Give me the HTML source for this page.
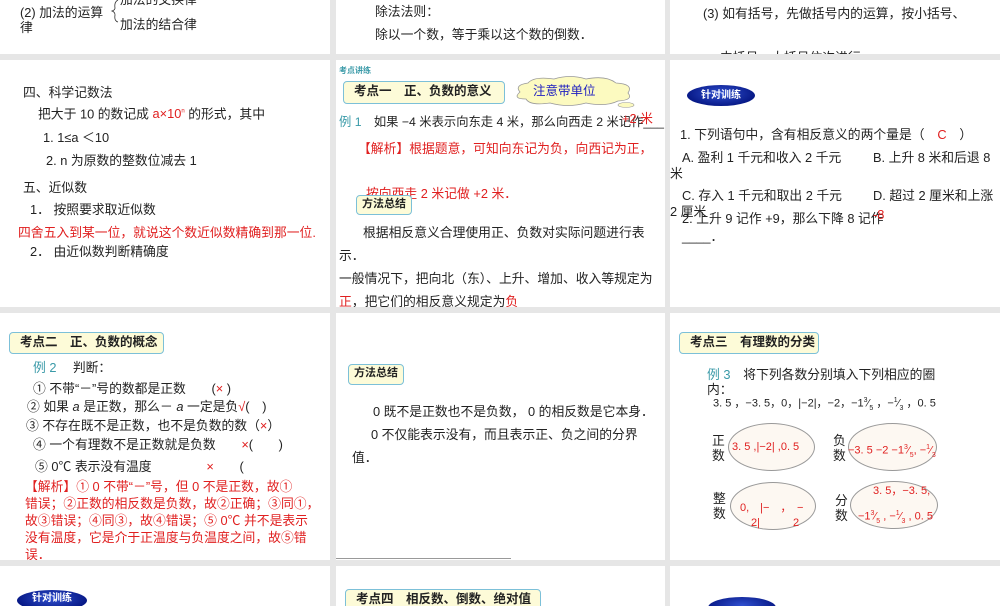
<!DOCTYPE html>
<html><head><meta charset="utf-8"><style>
*{margin:0;padding:0;box-sizing:border-box}
body{width:1000px;height:600px;background:#e6e6e6;position:relative;overflow:hidden;font-family:"Liberation Sans","Noto Sans CJK SC",sans-serif;font-size:12.8px;color:#222}
.p{position:absolute;background:#fff;overflow:hidden}
.t{position:absolute;white-space:nowrap;line-height:15px}
.r{color:#e02020}
.tl{color:#3a9aa8}
.box{position:absolute;background:#fdfbd8;border:1.5px solid #7cc0d8;border-radius:4px;font-weight:bold;font-size:12.5px;padding-left:10px;line-height:19px;white-space:nowrap}
.mf{position:absolute;background:#fdfbd8;border:1.5px solid #7cc0d8;border-radius:4px;font-weight:bold;font-size:11px;line-height:17px;text-align:center}
.ov{position:absolute;border-radius:50%;background:radial-gradient(ellipse at 50% 40%,#3050d0,#081a88 70%);color:#fff;font-weight:bold;font-size:10px;text-align:center}
.el{position:absolute;border:1px solid #999;border-radius:50%;background:#fdf8f2}
</style></head><body>
<!-- Row 1 -->
<div class="p" style="left:0;top:0;width:330px;height:54px">
<div class="t" style="left:20px;top:5px">(2) 加法的运算</div>
<div class="t" style="left:20px;top:20px">律</div>
<div class="t" style="left:120px;top:-8px">加法的交换律</div>
<div class="t" style="left:120px;top:17px">加法的结合律</div>
<svg style="position:absolute;left:110px;top:0" width="10" height="30"><path d="M8 0 Q4 2 5 8 Q5 10 2 11 Q5 12 5 15 Q4 21 8 22" fill="none" stroke="#333" stroke-width="0.8"/></svg>
</div>
<div class="p" style="left:336px;top:0;width:329px;height:54px">
<div class="t" style="left:39px;top:4px">除法法则：</div>
<div class="t" style="left:39px;top:27px">除以一个数，等于乘以这个数的倒数．</div>
</div>
<div class="p" style="left:670px;top:0;width:330px;height:54px">
<div class="t" style="left:33px;top:6px">(3) 如有括号，先做括号内的运算，按小括号、</div>
<div class="t" style="left:50px;top:50px">中括号、大括号依次进行．</div>
</div>
<!-- Row 2 -->
<div class="p" style="left:0;top:60px;width:330px;height:247px">
<div class="t" style="left:23px;top:25px">四、科学记数法</div>
<div class="t" style="left:38px;top:45px">把大于 10 的数记成 <span class="r">a×10<sup style="font-size:6px">n</sup></span> 的形式，其中</div>
<div class="t" style="left:43px;top:70px">1. 1≤a ＜10</div>
<div class="t" style="left:46px;top:93px">2. n 为原数的整数位减去 1</div>
<div class="t" style="left:23px;top:120px">五、近似数</div>
<div class="t" style="left:30px;top:142px">1． 按照要求取近似数</div>
<div class="t r" style="left:18px;top:165px">四舍五入到某一位，就说这个数近似数精确到那一位.</div>
<div class="t" style="left:30px;top:184px">2． 由近似数判断精确度</div>
</div>
<div class="p" style="left:336px;top:60px;width:329px;height:247px">
<div class="t tl" style="left:3px;top:3px;font-size:8px;font-weight:bold">考点讲练</div>
<div class="box" style="left:7px;top:21px;width:162px;height:23px">考点一　正、负数的意义</div>
<svg style="position:absolute;left:174px;top:15px" width="130" height="36"><path d="M10 17 Q4 10 18 8 Q24 1 44 4 Q60 -1 76 4 Q96 0 106 8 Q124 9 118 18 Q124 25 108 26 Q96 32 76 28 Q58 33 40 28 Q20 31 16 24 Q2 24 10 17Z" fill="#fcfac0" stroke="#999" stroke-width="0.8"/><ellipse cx="116" cy="30" rx="8" ry="2.5" fill="#fcfac0" stroke="#999" stroke-width="0.6"/></svg>
<div class="t" style="left:197px;top:24px;color:#2020c0;font-size:12.5px">注意带单位</div>
<div class="t" style="left:3px;top:55px;font-size:12.3px"><span class="tl">例 1</span>　如果 −4 米表示向东走 4 米，那么向西走 2 米记作___</div>
<div class="t r" style="left:286px;top:51px">+2 米</div>
<div class="t r" style="left:22px;top:81px">【解析】根据题意，可知向东记为负，向西记为正，</div>
<div class="t r" style="left:30px;top:126px">按向西走 2 米记做 +2 米．</div>
<div class="mf" style="left:20px;top:135px;width:56px;height:20px">方法总结</div>
<div class="t" style="left:27px;top:165px">根据相反意义合理使用正、负数对实际问题进行表</div>
<div class="t" style="left:3px;top:188px">示．</div>
<div class="t" style="left:3px;top:211px">一般情况下，把向北（东）、上升、增加、收入等规定为</div>
<div class="t" style="left:3px;top:234px"><span class="r">正</span>，把它们的相反意义规定为<span class="r">负</span></div>
</div>
<div class="p" style="left:670px;top:60px;width:330px;height:247px">
<div class="ov" style="left:17px;top:25px;width:68px;height:21px;line-height:21px">针对训练</div>
<div class="t" style="left:10px;top:67px">1. 下列语句中，含有相反意义的两个量是（　<span class="r">C</span>　）</div>
<div class="t" style="left:12px;top:90px">A. 盈利 1 千元和收入 2 千元</div>
<div class="t" style="left:203px;top:90px">B. 上升 8 米和后退 8</div>
<div class="t" style="left:0;top:106px">米</div>
<div class="t" style="left:12px;top:128px">C. 存入 1 千元和取出 2 千元</div>
<div class="t" style="left:203px;top:128px">D. 超过 2 厘米和上涨</div>
<div class="t" style="left:0;top:144px">2 厘米</div>
<div class="t" style="left:12px;top:151px">2. 上升 9 记作 +9，那么下降 8 记作</div>
<div class="t r" style="left:203px;top:147px">-8</div>
<div class="t" style="left:12px;top:169px">____．</div>
</div>
<!-- Row 3 -->
<div class="p" style="left:0;top:313px;width:330px;height:247px">
<div class="box" style="left:9px;top:19px;width:155px;height:22px">考点二　正、负数的概念</div>
<div class="t" style="left:33px;top:47px"><span class="tl">例 2</span>　 判断：</div>
<div class="t" style="left:33px;top:68px">① 不带“－”号的数都是正数　　(<span class="r">×</span> )</div>
<div class="t" style="left:27px;top:86px">② 如果 <i>a</i> 是正数，那么－ <i>a</i> 一定是负<span class="r">√</span>(　)</div>
<div class="t" style="left:26px;top:105px">③ 不存在既不是正数，也不是负数的数（<span class="r">×</span>）</div>
<div class="t" style="left:33px;top:124px">④ 一个有理数不是正数就是负数　　<span class="r">×</span>(　　)</div>
<div class="t" style="left:35px;top:146px">⑤ 0℃ 表示没有温度　　　　 <span class="r">×</span>　　(</div>
<div class="t r" style="left:25px;top:165px;line-height:17px">【解析】① 0 不带“－”号，但 0 不是正数，故①<br>错误；②正数的相反数是负数，故②正确；③同①，<br>故③错误；④同③，故④错误；⑤ 0℃ 并不是表示<br>没有温度，它是介于正温度与负温度之间，故⑤错<br>误．</div>
</div>
<div class="p" style="left:336px;top:313px;width:329px;height:247px">
<div class="mf" style="left:12px;top:51px;width:56px;height:21px">方法总结</div>
<div class="t" style="left:37px;top:91px">0 既不是正数也不是负数， 0 的相反数是它本身．</div>
<div class="t" style="left:35px;top:114px">0 不仅能表示没有，而且表示正、负之间的分界</div>
<div class="t" style="left:16px;top:137px">值．</div>
<div style="position:absolute;left:0;top:245px;width:175px;height:1px;background:#999"></div>
</div>
<div class="p" style="left:670px;top:313px;width:330px;height:247px">
<div class="box" style="left:9px;top:19px;width:140px;height:22px">考点三　有理数的分类</div>
<div class="t" style="left:37px;top:54px"><span class="tl">例 3</span>　将下列各数分别填入下列相应的圈</div>
<div class="t" style="left:37px;top:69px">内：</div>
<div class="t" style="left:43px;top:80px;font-size:11px">3. 5 ，−3. 5，0，|−2|，−2，−1<sup style="font-size:7px">3</sup>⁄<sub style="font-size:7px">5</sub> ，−<sup style="font-size:7px">1</sup>⁄<sub style="font-size:7px">3</sub> ，0. 5</div>
<div class="t" style="left:42px;top:120px;line-height:15px">正<br>数</div>
<div class="el" style="left:58px;top:110px;width:87px;height:48px"></div>
<div class="t r" style="left:62px;top:127px;font-size:11px">3. 5 ,|−2| ,0. 5</div>
<div class="t" style="left:163px;top:120px;line-height:15px">负<br>数</div>
<div class="el" style="left:178px;top:110px;width:89px;height:48px"></div>
<div class="t r" style="left:178px;top:127px;font-size:11px">−3. 5 −2 −1<sup style="font-size:7px">3</sup>⁄<sub style="font-size:7px">5</sub>, −<sup style="font-size:7px">1</sup>⁄<sub style="font-size:7px">3</sub></div>
<div class="t" style="left:43px;top:178px;line-height:15px">整<br>数</div>
<div class="el" style="left:60px;top:169px;width:86px;height:48px"></div>
<div class="t r" style="left:70px;top:188px;font-size:11px;line-height:15px">0,　|−　，　−<br>　2|　　　2</div>
<div class="t" style="left:165px;top:180px;line-height:15px">分<br>数</div>
<div class="el" style="left:180px;top:168px;width:88px;height:48px"></div>
<div class="t r" style="left:203px;top:171px;font-size:11px">3. 5，−3. 5,</div>
<div class="t r" style="left:188px;top:193px;font-size:11px">−1<sup style="font-size:7px">3</sup>⁄<sub style="font-size:7px">5</sub> , −<sup style="font-size:7px">1</sup>⁄<sub style="font-size:7px">3</sub> , 0. 5</div>
</div>
<!-- Row 4 -->
<div class="p" style="left:0;top:566px;width:330px;height:40px">
<div class="ov" style="left:17px;top:24px;width:70px;height:21px;line-height:18px">针对训练</div>
</div>
<div class="p" style="left:336px;top:566px;width:329px;height:40px">
<div class="box" style="left:9px;top:23px;width:196px;height:22px">考点四　相反数、倒数、绝对值</div>
</div>
<div class="p" style="left:670px;top:566px;width:330px;height:40px">
<div class="ov" style="left:38px;top:31px;width:68px;height:21px"></div>
</div>
</body></html>
